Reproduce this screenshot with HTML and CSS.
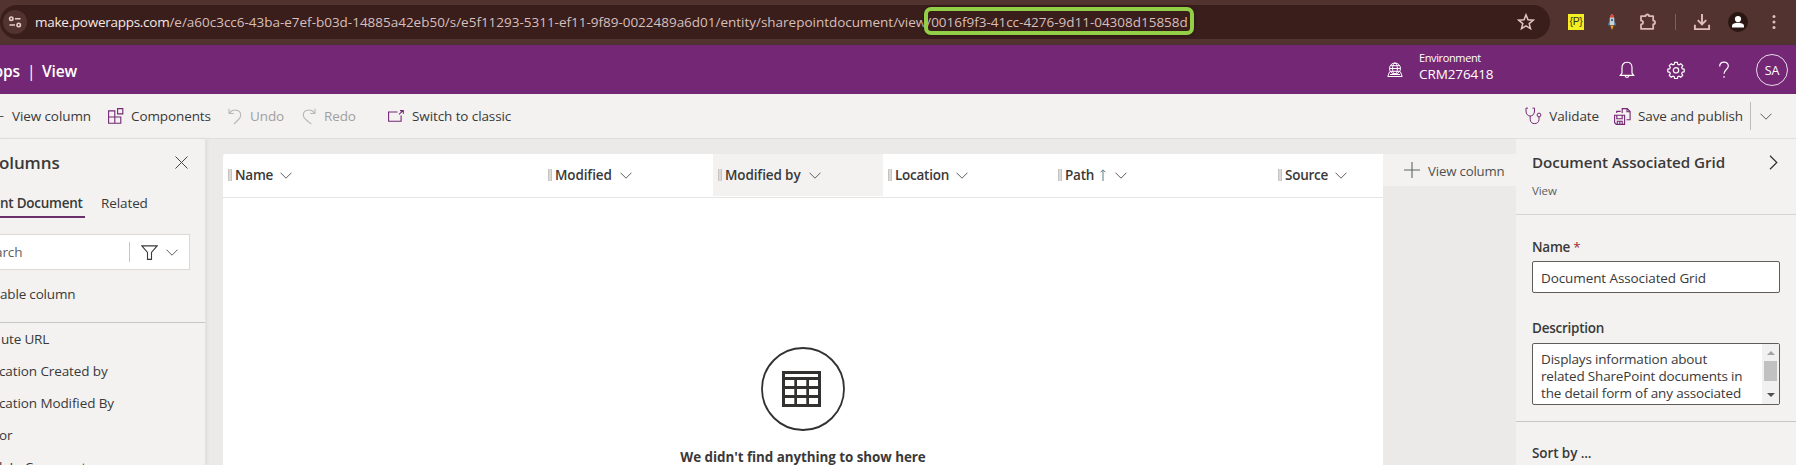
FILE: index.html
```html
<!DOCTYPE html>
<html lang="en">
<head>
<meta charset="utf-8">
<title>Power Apps | View</title>
<link rel="stylesheet" href="styles.css">
</head>
<body>
<svg class="defs" width="0" height="0">
  <symbol id="chev" viewBox="0 0 12 7"><path d="M.5 .7 6 6.2 11.500 .7" fill="none" stroke="currentColor"/></symbol>
</svg>
<div class="browser">
  <div class="address">
    <span class="site"><svg width="14" height="14" viewBox="0 0 14 14" fill="none" stroke="#e6cfcb" stroke-width="1.6"><circle cx="3.300" cy="3.700" r="1.700"/><path d="M7 3.700h5.500M1.500 10h5.500"/><circle cx="10.700" cy="10" r="1.700"/></svg></span>
    <span class="url"><span class="host">make.powerapps.com</span><span class="path">/e/a60c3cc6-43ba-e7ef-b03d-14885a42eb50/s/e5f11293-5311-ef11-9f89-0022489a6d01/entity/sharepointdocument/view/0016f9f3-41cc-4276-9d11-04308d15858d</span></span>
    <svg class="star" width="18" height="18" viewBox="0 0 18 18"><path d="M9 1.900 11 6.800l5.200.4-4 3.400 1.300 5.100L9 12.900l-4.500 2.800 1.300-5.100-4-3.400L7 6.800z" fill="none" stroke="#e0c6c2" stroke-width="1.500"/></svg>
    <span class="highlight"></span>
  </div>
  <div class="extensions">
    <span class="slot"><b class="pbadge">{P}</b></span>
    <span class="slot"><svg width="10" height="16" viewBox="0 0 10 16"><path d="M1 9.500 3 7v4.500H1zM9 9.500 7 7v4.500H9z" fill="#3f6f8f"/><path d="M5 0C7 1.500 7.500 4 7.300 7v4H2.700V7C2.500 4 3 1.500 5 0z" fill="#c9d3da"/><path d="M5 0C6.300.8 7 2.200 7.100 3.500H2.900C3 2.200 3.700.8 5 0z" fill="#d9432f"/><circle cx="5" cy="6" r="1.200" fill="#35769c"/><path d="M3.300 11.500h3.400L5 16z" fill="#f2a91f"/></svg></span>
    <span class="slot"><svg width="18" height="18" viewBox="0 0 18 18"><path d="M2 3.200h4.500c0-2.300 3.600-2.300 3.600 0h4.100v4.400c2.500 0 2.500 3.600 0 3.600v4.600H2v-4.400c2.700 0 2.700-3.800 0-3.800z" fill="none" stroke="#dcb9b5" stroke-width="1.800" stroke-linejoin="round"/></svg></span>
    <span class="slot narrow"><i class="bar"></i></span>
    <span class="slot"><svg width="18" height="18" viewBox="0 0 18 18" fill="none" stroke="#e3bfbb" stroke-width="1.900"><path d="M9 1v10M4.800 7.200 9 11.400l4.200-4.200M1.900 11.800v4.300h14.200v-4.300"/></svg></span>
    <span class="slot"><svg width="20" height="20" viewBox="0 0 20 20"><circle cx="10" cy="10" r="10" fill="#2a1613"/><circle cx="10" cy="7" r="3.100" fill="#fff"/><path d="M4 15.400v-1.600c0-4 12-4 12 0v1.600z" fill="#fff"/></svg></span>
    <span class="slot"><svg width="4" height="16" viewBox="0 0 4 16" fill="#e0c0bc"><circle cx="2" cy="2.500" r="1.500"/><circle cx="2" cy="8" r="1.500"/><circle cx="2" cy="13.500" r="1.500"/></svg></span>
  </div>
</div>

<header class="nav">
  <div class="brand"><span class="app">pps</span><span class="sep">|</span><span>View</span></div>
  <div class="env">
    <svg width="16" height="16" viewBox="0 0 16 16" fill="none" stroke="#fff" stroke-width="1"><circle cx="8" cy="6.500" r="5.500"/><ellipse cx="8" cy="6.500" rx="2.400" ry="5.500"/><path d="M2.500 6.500h11M3.300 3.700h9.400M3.300 9.300h9.400M2.700 9.500 .8 14.500h14.400l-1.900-5M3 12.500h10"/></svg>
    <div class="envtext"><span class="envlabel">Environment</span><span class="envname">CRM276418</span></div>
  </div>
  <div class="navicons">
    <span class="bell"><svg width="16" height="18" viewBox="0 0 16 18" fill="none" stroke="#fff" stroke-width="1.200"><path d="M3 12V6.500C3 -.5 13 -.5 13 6.500V12l1.700 2.300H1.300zM6 14.500c.3 2.400 3.700 2.400 4 0"/></svg></span>
    <span><svg width="18" height="18" viewBox="0 0 18 18" fill="none" stroke="#fff" stroke-width="1.200"><path d="M7.700 1.300h2.600l.5 2 1.300.5 1.700-1 1.900 1.900-1 1.700.5 1.300 2 .5v2.600l-2 .5-.5 1.300 1 1.700-1.900 1.900-1.700-1-1.300.5-.5 2H7.700l-.5-2-1.300-.5-1.700 1-1.900-1.900 1-1.700-.5-1.300-2-.5V8.200l2-.5.5-1.300-1-1.700 1.900-1.900 1.700 1 1.300-.5z"/><circle cx="9" cy="9.300" r="2.700"/></svg></span>
    <span><svg width="12" height="18" viewBox="0 0 12 18" fill="none" stroke="#fff" stroke-width="1.200"><path d="M1.700 5.500C1.700 -.5 10.300 -.2 10.300 5 10.300 8.500 6 8.600 6 12.800M6 15v1.700"/></svg></span>
    <span><b class="persona">SA</b></span>
  </div>
</header>

<div class="toolbar">
  <svg class="plus-cut" width="4" height="16" viewBox="0 0 4 16"><path d="M0 8.500h3.500" stroke="#555"/></svg>
  <span class="cmd c-view">View column</span>
  <svg class="i-comp" width="16" height="16" viewBox="0 0 16 16" fill="none" stroke="#742774" stroke-width="1.100"><path d="M.6 2.900h6.200v12.300H.6zM.6 9h12.200v6.200H6.800V9M9.600.6h5.200v5.300H9.600z"/></svg>
  <span class="cmd c-comp">Components</span>
  <svg class="i-undo" width="14" height="17" viewBox="0 0 14 17" fill="none" stroke="#bab8b7" stroke-width="1.100"><path d="M1 .8v4.700h4.800M1.200 5.300C5 .2 12.700 1.500 12.700 7c0 2.500-1 3.600-6.700 9"/></svg>
  <span class="cmd off c-undo">Undo</span>
  <svg class="i-redo" width="14" height="17" viewBox="0 0 14 17" fill="none" stroke="#bab8b7" stroke-width="1.100"><path d="M13 .8v4.700H8.200M12.800 5.300C9 .2 1.300 1.500 1.300 7c0 2.500 1 3.600 8 9"/></svg>
  <span class="cmd off c-redo">Redo</span>
  <svg class="i-switch" width="16" height="12" viewBox="0 0 16 12" fill="none" stroke="#742774" stroke-width="1.100"><path d="M9.500 2H.6v9.300h12.500V5.500M11 4.300 15 .7M12 .6h3.300V3.700"/></svg>
  <span class="cmd c-switch">Switch to classic</span>
  <div class="right">
    <svg class="i-valid" width="17" height="18" viewBox="0 0 17 18" fill="none" stroke="#742774" stroke-width="1"><path d="M3 1.100H1V4c0 6.700 8.500 6.700 8.500 0V1.100h-2M5.200 9v3.500c0 5.500 8.800 5.500 8.800 0V10"/><circle cx="14" cy="8" r="1.900"/></svg>
    <span class="cmd">Validate</span>
    <svg class="i-save" width="17" height="17" viewBox="0 0 17 17" fill="none" stroke="#742774" stroke-width="1.100"><path d="M.6 7.200h10v9.200H2.300L.6 14.700zM2.800 7.200v3.600h5.400V7.200M3.300 16.400v-3.200h4.900v3.200M5.800 13.500v3M2.700 5V3.400h4M8.200 5V.6h5l2.900 2.900v8.200H12.500M13 .8v3h3"/></svg>
    <span class="cmd">Save and publish</span>
    <i class="vr"></i>
    <svg class="chev" width="12" height="7"><use href="#chev"/></svg>
  </div>
</div>

<main class="work">
  <aside class="left">
    <div class="ltitle"><h2>olumns</h2><svg width="13" height="13" viewBox="0 0 13 13"><path d="M.5.5l12 12M12.500.5l-12 12" stroke="#444" stroke-width="1"/></svg></div>
    <div class="tabs"><span class="tab on">nt Document</span><span class="tab">Related</span></div>
    <div class="search"><span class="ph">arch</span><i></i><svg width="17" height="15" viewBox="0 0 17 15" fill="none" stroke="#3b3a39" stroke-width="1.100"><path d="M.9.900h15.200L10.500 7.500v6.900h-4V7.500z"/></svg><svg class="chev" width="12" height="7"><use href="#chev"/></svg></div>
    <div class="newcol">able column</div>
    <ul class="list"><li class="first">ute URL</li><li>cation Created by</li><li>cation Modified By</li><li>or</li><li>k In Comment</li></ul>
  </aside>
  <section class="canvas">
    <div class="grid">
      <div class="heads">
        <div class="head wide"><i class="grip"></i>Name<svg class="chev" width="12" height="7"><use href="#chev"/></svg></div>
        <div class="head modified"><i class="grip"></i>Modified<svg class="chev" width="12" height="7"><use href="#chev"/></svg></div>
        <div class="head modified hover"><i class="grip"></i>Modified by<svg class="chev" width="12" height="7"><use href="#chev"/></svg></div>
        <div class="head"><i class="grip"></i>Location<svg class="chev" width="12" height="7"><use href="#chev"/></svg></div>
        <div class="head path-col"><i class="grip"></i>Path<svg class="sort" width="6" height="12" viewBox="0 0 6 12" fill="none" stroke="#5f7f80"><path d="M3 12V1M.5 3.300 3 .8l2.500 2.500"/></svg><svg class="chev" width="12" height="7"><use href="#chev"/></svg></div>
        <div class="head src-col"><i class="grip"></i>Source<svg class="chev" width="12" height="7"><use href="#chev"/></svg></div>
      </div>
      <div class="empty">
        <svg width="84" height="84" viewBox="0 0 84 84"><circle cx="42" cy="42" r="41" fill="none" stroke="#323130" stroke-width="1.800"/><path d="M21 24h39v36H21z" fill="#323130"/><path d="M24 27h33v3H24zM24 33h9.300v6H24zM36 33h9.300v6H36zM48 33h9v6h-9zM24 42h9.300v6H24zM36 42h9.300v6H36zM48 42h9v6h-9zM24 51h9.300v6H24zM36 51h9.300v6H36zM48 51h9v6h-9z" fill="#fff"/></svg>
        <p>We didn't find anything to show here</p>
      </div>
    </div>
    <div class="addcol"><svg width="16" height="16" viewBox="0 0 16 16"><path d="M8 0v16M0 8h16" stroke="#5d6665" stroke-width="1.100"/></svg><span>View column</span></div>
  </section>
  <aside class="props">
    <div class="phead"><div class="prow"><h2>Document Associated Grid</h2><svg width="9" height="15" viewBox="0 0 9 15"><path d="M1 .8l6.800 6.700L1 14.200" fill="none" stroke="#323130" stroke-width="1.200"/></svg></div><div class="kind">View</div></div>
    <div class="form">
      <label>Name <em>*</em></label>
      <div class="input">Document Associated Grid</div>
      <label class="desc">Description</label>
      <div class="area"><div class="atext">Displays information about<br>related SharePoint documents in<br>the detail form of any associated</div><div class="scroll"><i class="up"></i><i class="thumb"></i><i class="down"></i></div></div>
    </div>
    <div class="sortby">Sort by ...</div>
  </aside>
</main>
</body>
</html>
```
FILE: styles.css
```css
* { box-sizing: border-box; }
body { margin: 0; width: 1796px; height: 465px; overflow: hidden; background: #ebeae9; color: #3a3938; font: 13.5px/20px "Open Sans", "Noto Sans", sans-serif; letter-spacing: -.1px; white-space: nowrap; }
svg { display: block; flex: none; }
h2, p, ul { margin: 0; padding: 0; }
.defs { position: absolute; }

.browser { display: flex; height: 45px; background: #52332f; border-bottom: 1px solid #4b3035; padding-top: 5px; }
.address { position: relative; display: flex; align-items: center; width: 1550px; height: 34px; padding-left: 3px; border-radius: 17px; background: #391e1b; }
.site { display: flex; align-items: center; justify-content: center; width: 24px; height: 24px; border-radius: 50%; background: #52332f; }
.url { flex: 1; margin-left: 8px; color: #d7bfbc; letter-spacing: -.015px; }
.host { color: #f8e7e4; letter-spacing: -.27px; }
.star { margin-right: 15px; }
.highlight { position: absolute; left: 924px; top: 2px; width: 270px; height: 28px; border: 4px solid #92cf46; border-radius: 7px; box-shadow: 0 0 3px #241411; }
.extensions { display: flex; align-items: center; height: 34px; margin-left: 8px; }
.slot { display: flex; align-items: center; justify-content: center; width: 36px; }
.narrow { width: 18px; }
.bar { width: 1px; height: 16px; background: #805d59; }
.pbadge { width: 16px; height: 16px; background: #f3ef22; color: #35341a; font: 10.5px/15px "Liberation Sans", sans-serif; letter-spacing: -.3px; text-align: center; }

.nav { display: flex; height: 49px; background: #742774; color: #fff; }
.brand { display: flex; width: 1387px; padding-top: 16px; font-size: 15.500px; font-weight: 600; }
.app { width: 20px; display: flex; justify-content: flex-end; }
.sep { margin: 0 8px 0 7px; font-weight: 400; width: 7px; text-align: center; }
.env { display: flex; width: 217px; gap: 16px; }
.env svg { margin-top: 17px; }
.envtext { display: flex; flex-direction: column; padding-top: 5px; line-height: 16px; }
.envlabel { font-size: 11px; letter-spacing: -.38px; }
.navicons { display: flex; height: 49px; }
.navicons span { width: 48px; display: flex; align-items: center; justify-content: center; }
.navicons .bell { padding-right: 2px; }
.persona { width: 32px; height: 32px; border: 1px solid #e9d9e9; border-radius: 50%; text-align: center; font-weight: 400; font-size: 12.500px; line-height: 31px; }

.toolbar { display: flex; align-items: center; height: 45px; background: #f3f2f1; border-bottom: 1px solid #e0dfde; }
.off { color: #a19f9d; }
.c-view { margin-left: 8px; width: 96px; }
.c-comp { margin-left: 7px; width: 97px; }
.c-undo { margin-left: 8px; width: 52px; }
.c-redo { margin-left: 8px; width: 64px; }
.c-switch { margin-left: 8px; }
.right { display: flex; align-items: center; margin-left: auto; padding-right: 24px; }
.i-valid { margin-right: 7px; }
.i-save { margin: 0 7px 0 15px; }
.vr { width: 1px; height: 28px; margin: 0 9px 0 7px; background: #bdbbb9; }
.chev { color: #605e5c; }

.work { display: flex; height: 326px; }
.left { width: 206px; background: #f3f2f1; border-right: 1px solid #e3e2e0; overflow: hidden; box-shadow: 1px 0 3px #dddcdb; }
.ltitle { display: flex; justify-content: space-between; align-items: center; height: 46px; padding: 1px 17px 0 0; }
.ltitle h2 { margin-left: -1px; font-size: 17px; font-weight: 600; line-height: 24px; }
.tabs { display: flex; height: 34px; gap: 16px; }
.tab { height: 33px; line-height: 36px; }
.tab.on { width: 85px; font-weight: 600; border-bottom: 2px solid #6b2f6b; letter-spacing: -.25px; }
.search { display: flex; align-items: center; width: 190px; height: 36px; margin-top: 15px; padding-right: 11px; background: #fff; border: 1px solid #dcdad8; border-left: 0; }
.ph { flex: 1; margin-left: -5px; color: #605e5c; }
.search i { width: 1px; height: 20px; background: #c8c6c4; margin-right: 11px; }
.search .chev { margin-left: 8px; }
.newcol { height: 53px; padding-top: 14px; border-bottom: 1px solid #c8c6c4; letter-spacing: -.18px; }
.list { list-style: none; }
.list li { height: 32px; line-height: 32px; margin-left: -1px; }
.list .first { margin-left: 1px; letter-spacing: -.2px; }

.canvas { display: flex; width: 1310px; padding: 15px 0 0 17px; }
.grid { width: 1160px; height: 311px; background: #fff; border-radius: 3px 0 0 0; }
.heads { display: flex; height: 44px; border-bottom: 1px solid #e6e5e4; }
.head { display: flex; align-items: center; width: 170px; height: 42px; padding-left: 5px; font-weight: 600; letter-spacing: -.25px; }
.wide { width: 320px; }
.modified { letter-spacing: -.12px; }
.path-col { width: 220px; }
.src-col { width: 110px; }
.hover { background: #f3f2f1; }
.grip { width: 4px; height: 12px; margin-right: 3px; background: #dad9d8; border-right: 1px solid #c5c4c3; border-left: 1px solid #c5c4c3; }
.head .chev { margin-left: 6.500px; }
.modified .chev { margin-left: 8px; }
.head .sort { margin: 0 2px 0 6px; }
.empty { display: flex; flex-direction: column; align-items: center; padding-top: 149px; }
.empty p { margin-top: 16px; font-size: 13.400px; font-weight: 700; letter-spacing: -.05px; }
.addcol { display: flex; align-items: center; width: 133px; height: 32px; padding-left: 21px; gap: 8px; background: #f3f2f1; color: #50504e; }
.addcol span { padding-top: 2px; font-size: 13.200px; letter-spacing: -.15px; }

.props { width: 280px; background: #f3f2f1; }
.phead { height: 76px; padding: 13px 18px 0 16px; border-bottom: 1px solid #d6d4d2; }
.prow { display: flex; justify-content: space-between; align-items: center; }
.prow h2 { font-size: 15.200px; line-height: 20px; font-weight: 600; letter-spacing: -.06px; }
.kind { margin-top: 9px; color: #605e5c; font-size: 11.500px; }
.form { height: 207px; padding: 22px 16px 0; border-bottom: 1px solid #c8c6c4; }
.form label { display: block; font-weight: 600; letter-spacing: -.25px; }
.form em { color: #a4262c; font-style: normal; font-weight: 400; }
.input { height: 32px; margin-top: 4px; padding: 0 8px; background: #fff; border: 1px solid #605e5c; border-radius: 2px; line-height: 32px; }
.form .desc { margin-top: 25px; }
.area { display: flex; justify-content: space-between; height: 62px; margin-top: 5px; padding-left: 8px; background: #fff; border: 1px solid #605e5c; border-radius: 2px; overflow: hidden; }
.atext { padding-top: 7px; line-height: 17px; letter-spacing: -.17px; }
.scroll { display: flex; flex-direction: column; align-items: center; width: 17px; background: #f1f1f1; }
.up { margin-top: 7px; border: 4px solid transparent; border-top: 0; border-bottom-color: #a3a3a3; }
.thumb { width: 13px; height: 20px; margin-top: 6px; background: #c1c1c1; }
.down { margin-top: 12px; border: 4px solid transparent; border-bottom: 0; border-top-color: #505050; }
.sortby { padding: 21px 16px; font-weight: 600; }
```
